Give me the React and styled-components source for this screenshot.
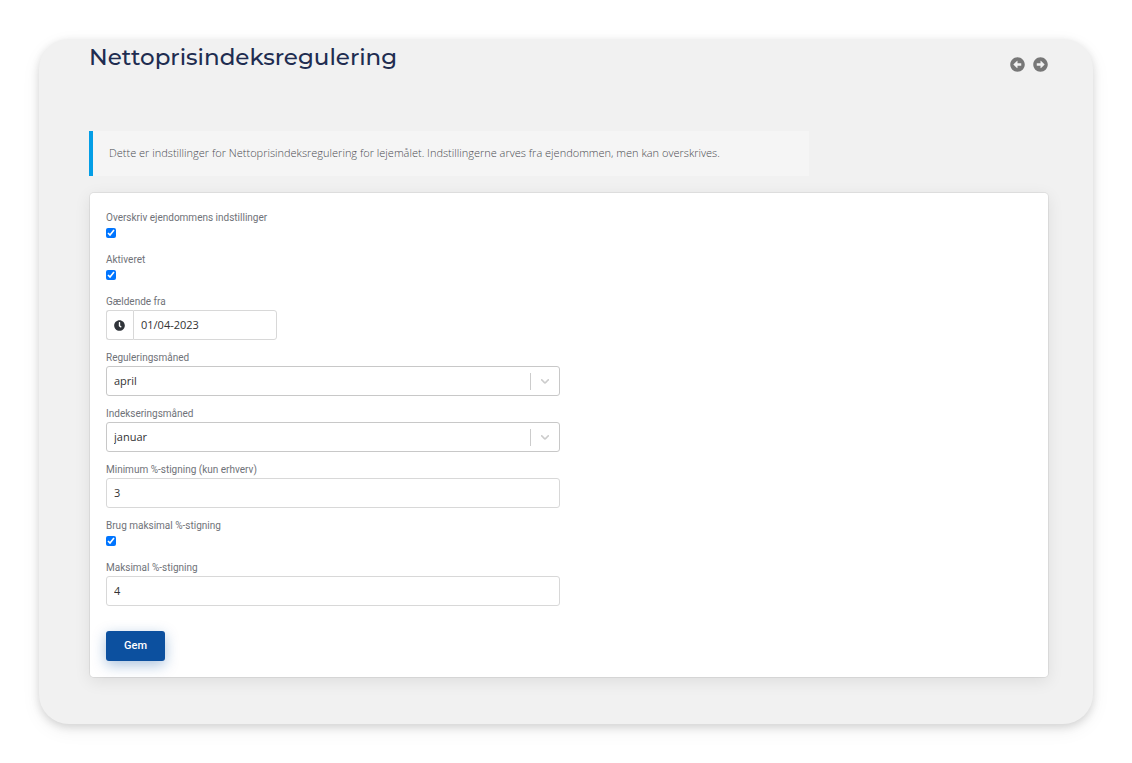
import React, { useState } from "react";
import styled, { createGlobalStyle } from "styled-components";
import {
  FaArrowAltCircleLeft,
  FaArrowAltCircleRight,
  FaClock,
} from "react-icons/fa";

const months = [
  "januar",
  "februar",
  "marts",
  "april",
  "maj",
  "juni",
  "juli",
  "august",
  "september",
  "oktober",
  "november",
  "december",
];

export default function App() {
  const [values, setValues] = useState({
    override: true,
    active: true,
    from: "01/04-2023",
    regulationMonth: "april",
    indexMonth: "januar",
    min: "3",
    useMax: true,
    max: "4",
  });
  const set = (name, value) => setValues({ ...values, [name]: value });

  return (
    <>
      <GlobalStyle />
      <Panel>
        <Header>
          <Title>Nettoprisindeksregulering</Title>
          <Nav>
            <NavLink href="#forrige" aria-label="Forrige">
              <FaArrowAltCircleLeft />
            </NavLink>
            <NavLink href="#naeste" aria-label="Næste">
              <FaArrowAltCircleRight />
            </NavLink>
          </Nav>
        </Header>
        <Notice>
          Dette er indstillinger for Nettoprisindeksregulering for lejemålet.
          Indstillingerne arves fra ejendommen, men kan overskrives.
        </Notice>
        <Card onSubmit={(e) => e.preventDefault()}>
          <Fields>
            <CheckField
              id="override"
              label="Overskriv ejendommens indstillinger"
              checked={values.override}
              onChange={set}
            />
            <CheckField
              id="active"
              label="Aktiveret"
              checked={values.active}
              onChange={set}
            />
            <Field>
              <Label htmlFor="from">Gældende fra</Label>
              <DateGroup>
                <Addon>
                  <FaClock />
                </Addon>
                <DateInput
                  id="from"
                  value={values.from}
                  onChange={(e) => set("from", e.target.value)}
                />
              </DateGroup>
            </Field>
            <MonthField
              id="regulationMonth"
              label="Reguleringsmåned"
              value={values.regulationMonth}
              onChange={set}
            />
            <MonthField
              id="indexMonth"
              label="Indekseringsmåned"
              value={values.indexMonth}
              onChange={set}
            />
            <TextField
              id="min"
              label="Minimum %-stigning (kun erhverv)"
              value={values.min}
              onChange={set}
            />
            <CheckField
              id="useMax"
              label="Brug maksimal %-stigning"
              checked={values.useMax}
              onChange={set}
            />
            <TextField
              id="max"
              label="Maksimal %-stigning"
              value={values.max}
              onChange={set}
            />
          </Fields>
          <Button type="submit">Gem</Button>
        </Card>
      </Panel>
    </>
  );
}

function CheckField({ id, label, checked, onChange }) {
  return (
    <Field>
      <Label htmlFor={id}>{label}</Label>
      <Checkbox
        type="checkbox"
        id={id}
        checked={checked}
        onChange={(e) => onChange(id, e.target.checked)}
      />
    </Field>
  );
}

function TextField({ id, label, value, onChange }) {
  return (
    <Field>
      <Label htmlFor={id}>{label}</Label>
      <Input
        id={id}
        value={value}
        onChange={(e) => onChange(id, e.target.value)}
      />
    </Field>
  );
}

function MonthField({ id, label, value, onChange }) {
  return (
    <Field>
      <Label htmlFor={id}>{label}</Label>
      <SelectBox>
        <Select
          id={id}
          value={value}
          onChange={(e) => onChange(id, e.target.value)}
        >
          {months.map((month) => (
            <option key={month}>{month}</option>
          ))}
        </Select>
        <Indicator>
          <svg width="14" height="14" viewBox="0 0 20 20" fill="currentColor">
            <path d="M4.516 7.548c0.436-0.446 1.043-0.481 1.576 0l3.908 3.747 3.908-3.747c0.533-0.481 1.141-0.446 1.574 0 0.436 0.445 0.408 1.197 0 1.615-0.406 0.418-4.695 4.502-4.695 4.502-0.217 0.223-0.502 0.335-0.787 0.335s-0.57-0.112-0.789-0.335c0 0-4.287-4.084-4.695-4.502s-0.436-1.17 0-1.615z" />
          </svg>
        </Indicator>
      </SelectBox>
    </Field>
  );
}

const GlobalStyle = createGlobalStyle`
  * {
    box-sizing: border-box;
  }
  body {
    margin: 0;
    background: #fff;
    font-family: Roboto, "Liberation Sans", sans-serif;
  }
`;

const Panel = styled.main`
  margin: 39px;
  padding: 0 44px 46px 50px;
  display: flex;
  flex-direction: column;
  border-radius: 30px;
  background: #f1f1f1;
  box-shadow: 0 3px 8px rgba(0, 0, 0, 0.14), 0 6px 20px rgba(0, 0, 0, 0.06);
`;

const Header = styled.header`
  display: flex;
  justify-content: space-between;
  padding: 2px 0 58px;
`;

const Title = styled.h1`
  margin: 0;
  font-family: Montserrat, Inter, sans-serif;
  font-size: 23px;
  line-height: 32px;
  font-weight: 500;
  color: #202c50;
`;

const Nav = styled.nav`
  display: flex;
  gap: 8px;
  padding: 16px 1px 0 0;
`;

const NavLink = styled.a`
  display: flex;
  height: 15px;
  font-size: 15px;
  color: #777;
`;

const Notice = styled.p`
  margin: 0 0 16px;
  width: 720px;
  max-width: 100%;
  padding: 11px 16px 13px;
  border-left: 4px solid #049ee6;
  background: #f5f5f5;
  font-family: "Open Sans", "Noto Sans", sans-serif;
  font-size: 11px;
  font-weight: 300;
  line-height: 21px;
  color: #4c4c52;
`;

const Card = styled.form`
  padding: 16px;
  border: 1px solid rgba(0, 0, 0, 0.06);
  border-radius: 5px;
  background: #fff;
  background-clip: padding-box;
  box-shadow: 0 4px 16px rgba(0, 0, 0, 0.08);
`;

const Fields = styled.div`
  width: 49%;
  display: flex;
  flex-direction: column;
  gap: 9px;
`;

const Field = styled.div`
  display: flex;
  flex-direction: column;
  align-items: flex-start;
`;

const Label = styled.label`
  padding-top: 1px;
  font-size: 10px;
  line-height: 16px;
  color: #6f7278;
`;

const Checkbox = styled.input`
  width: 10px;
  height: 10px;
  margin: 2px 0 4px;
  accent-color: #0075ff;
`;

const Input = styled.input`
  width: 100%;
  height: 30px;
  padding: 0 7px 1px;
  border: 1px solid #d8d8d8;
  border-radius: 3px;
  background: #fff;
  font-family: "Open Sans", "Noto Sans", sans-serif;
  font-size: 11px;
  color: #333;
`;

const DateGroup = styled.div`
  display: flex;
  width: 171px;
`;

const Addon = styled.span`
  display: flex;
  align-items: center;
  justify-content: center;
  width: 27px;
  padding-right: 1px;
  border: 1px solid #d8d8d8;
  border-right: 0;
  border-radius: 3px 0 0 3px;
  font-size: 11px;
  color: #30343a;
`;

const DateInput = styled(Input)`
  flex: 1;
  min-width: 0;
  border-radius: 0 3px 3px 0;
`;

const SelectBox = styled.div`
  display: grid;
  width: 100%;
`;

const Select = styled(Input).attrs({ as: "select" })`
  grid-area: 1 / 1;
  appearance: none;
  border-color: #c8c8c8;
`;

const Indicator = styled.span`
  grid-area: 1 / 1;
  place-self: center end;
  display: flex;
  align-items: center;
  height: 17px;
  padding: 0 7px;
  margin-right: 1px;
  border-left: 1px solid #ccc;
  color: #ccc;
  pointer-events: none;
`;

const Button = styled.button`
  display: block;
  margin-top: 25px;
  width: 59px;
  height: 30px;
  padding: 0 0 2px;
  border: 0;
  border-radius: 3px;
  background: #0c509f;
  box-shadow: 0 4px 14px rgba(12, 80, 159, 0.35);
  font-family: Roboto, sans-serif;
  font-size: 11px;
  font-weight: 500;
  color: #fff;
`;
